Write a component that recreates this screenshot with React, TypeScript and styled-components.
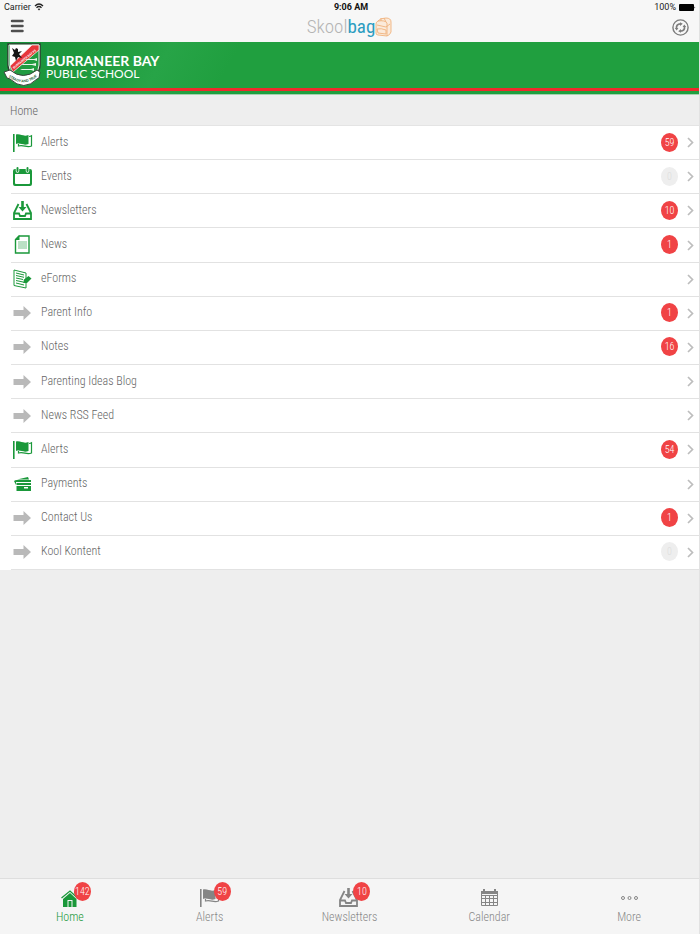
import React from "react";
import styled, { createGlobalStyle } from "styled-components";

const GREEN = "#1a983a";
const ui = `"Roboto Condensed", Roboto, sans-serif`;

const GlobalStyle = createGlobalStyle`
  * { box-sizing: border-box; }
  html { background: #eeeeee; }
  body { margin: 0; font-family: ${ui}; font-weight: 300; color: #666666; }
  a { color: inherit; text-decoration: none; }
  button { border: 0; padding: 0; background: none; cursor: pointer; }
  svg { display: block; flex: none; }
`;

const Page = styled.div`
  min-height: 100vh;
  display: flex;
  flex-direction: column;
  background: #eeeeee;
  border-right: 1px solid #e2e2e2;
`;

const TopBar = styled.header`
  background: #f7f7f7;
  height: 42px;
`;

const Columns = styled.div`
  display: grid;
  grid-template-columns: 1fr auto 1fr;
  align-items: center;
`;

const StatusBar = styled(Columns)`
  height: 14px;
  padding: 0 3px 0 4px;
  font: 400 9px/14px Roboto, sans-serif;
  color: #222222;
`;

const Side = styled.div<{ $end?: boolean }>`
  display: flex;
  align-items: center;
  gap: 3px;
  justify-content: ${(p) => (p.$end ? "flex-end" : "flex-start")};
`;

const Clock = styled.time`
  font-weight: 700;
  color: #111111;
  padding-left: 2px;
`;

const TitleBar = styled(Columns)`
  height: 26px;
  padding: 0 10px;
`;

const Brand = styled.h1`
  margin: 0;
  display: flex;
  align-items: center;
  font: 300 19px/26px ${ui};
  color: #b4b4b4;
`;

const BrandStrong = styled.span`
  font-weight: 400;
  color: #2b9cc0;
`;

const Banner = styled.div`
  height: 53px;
  background: linear-gradient(120deg, #16913a 0, #1f9c3e 90px, #27a447 150px, #209f3f 210px, #209f3f 100%);
  display: flex;
  flex-direction: column;
  border-bottom: 1px solid #a6d3af;
`;

const BannerContent = styled.div`
  flex: 1;
  display: flex;
  align-items: center;
  gap: 5px;
  padding-left: 3px;
`;

const Stripe = styled.div`
  flex: none;
  height: 3px;
  margin-bottom: 3px;
  background: #ee2a2c;
`;

const School = styled.div`
  display: flex;
  flex-direction: column;
  font: 400 12px/13px Lato, sans-serif;
  color: #ffffff;
  padding-top: 4px;
`;

const SchoolName = styled.strong`
  font-size: 14px;
  line-height: 12px;
  font-weight: 700;
`;

const Crumb = styled.div`
  height: 31px;
  padding: 0 10px;
  font-size: 12px;
  line-height: 32px;
  border-bottom: 1px solid #e4e4e4;
`;

const List = styled.ul`
  margin: 0;
  padding: 0;
  list-style: none;
  min-height: 444px;
  display: grid;
  grid-auto-rows: 1fr;
  background: #ffffff;
`;

const Item = styled.li`
  padding-left: 11px;
`;

const RowLink = styled.a`
  height: 100%;
  display: flex;
  align-items: center;
  border-bottom: 1px solid #e2e2e2;
  padding: 0 5px 1px 0;
`;

const RowIcon = styled.span`
  width: 30px;
  padding: 1px 0 0 2px;
`;

const RowLabel = styled.span`
  flex: 1;
  font-size: 12px;
  line-height: 16px;
  padding-bottom: 1px;
`;

const Badge = styled.span<{ $muted?: boolean }>`
  width: 17px;
  height: 19px;
  border-radius: 50%;
  background: ${(p) => (p.$muted ? "#eeeeee" : "#f04345")};
  color: ${(p) => (p.$muted ? "#dddddd" : "#ffffff")};
  font-size: 10px;
  line-height: 19px;
  text-align: center;
  margin-right: 8px;
`;

const TabBar = styled.nav`
  margin-top: auto;
  height: 56px;
  display: grid;
  grid-template-columns: repeat(5, 1fr);
  background: #f5f5f5;
  border-top: 1px solid #dedede;
`;

const Tab = styled.a<{ $active?: boolean }>`
  display: flex;
  flex-direction: column;
  align-items: center;
  padding-top: 9px;
  gap: 1px;
  font-size: 12px;
  line-height: 16px;
  color: ${(p) => (p.$active ? GREEN : "#888888")};
`;

const TabIcon = styled.span`
  position: relative;
  height: 20px;
`;

const TabBadge = styled(Badge)`
  position: absolute;
  top: -6px;
  left: 14px;
  margin: 0;
`;

type IconKind = "flag" | "calendar" | "inbox" | "news" | "form" | "arrow" | "cards" | "home" | "grid" | "more";

const drawings: Record<IconKind, React.ReactNode> = {
  flag: (
    <>
      <path d="M0 1h1.600v18H0z" />
      <path d="M3 1.500c5-1 7 2.500 12.500.5v9C10 13 8 9.500 3 11z" />
      <path d="M16 3.500q1.500 0 2.500-.7V13c-5 2-7.500-1.500-13 0v-2" fill="none" stroke="currentColor" strokeWidth="1.200" />
    </>
  ),
  calendar: (
    <>
      <path fillRule="evenodd" d="M2 2h15a2 2 0 0 1 2 2v13a2 2 0 0 1-2 2H2a2 2 0 0 1-2-2V4a2 2 0 0 1 2-2zm0 5v9q0 1 1 1h13q1 0 1-1V7z" />
      <path d="M4.500 1v3M14.500 1v3" stroke="#fff" strokeWidth="3.500" strokeLinecap="round" />
      <path d="M4.500 1v3M14.500 1v3" stroke="currentColor" strokeWidth="2" strokeLinecap="round" />
    </>
  ),
  inbox: (
    <>
      <path d="M5.500 3 1 12v6h17v-6L13.500 3M1 12.500h5l1 2.500h5l1-2.500h5" fill="none" stroke="currentColor" strokeWidth="1.800" />
      <path d="M8.200 0h2.600v6h2.700l-4 4.500-4-4.500h2.700z" />
    </>
  ),
  news: (
    <>
      <path d="M6 1h10v17H2.500V4.500z" fill="none" stroke="currentColor" strokeWidth="1.400" />
      <path d="M6.500 0v5H2z" />
      <path d="M5 7h9M5 9h9M5 11h9M5 13h9" stroke="currentColor" strokeWidth=".6" />
    </>
  ),
  form: (
    <>
      <path d="m1 1 12 3v15L1 16.500z" fill="none" stroke="currentColor" />
      <path d="m3 4 8 2M3 6.500l8 1.800M3 9l7 1.500M3 11.500l7 1.500M3 14l8 2" stroke="currentColor" />
      <path d="m10 14 1-3.500L15.500 7 18.500 9.500 14 14z" />
    </>
  ),
  arrow: <path d="M.500 7h10V3L18 10l-7.500 7v-4H.500z" />,
  cards: (
    <>
      <path d="m4 5.500 11-2.500 1 2.500z" />
      <path d="M4 6h14v2H3v3L1 7q1-1 3-1z" />
      <path fillRule="evenodd" d="M3.500 9H18v2H3.500zm0 3H18v5H3.500zm7.500 1v1.500h4V13z" />
    </>
  ),
  home: (
    <>
      <path d="m1.500 10 8.500-7 7.500 7" fill="none" stroke="currentColor" strokeWidth="1.300" />
      <path fillRule="evenodd" d="M3 11l7-6 6.500 6v8H3zm4.500 1v7h1v-6h3v6h1v-7zM14 3h2v4l-2-2z" />
    </>
  ),
  grid: (
    <>
      <path d="M2.500 3.500h16v14h-16zM2 7.500h16M2 10.500h16M2 14.500h16M6.500 7v11M10.500 7v11M14.500 7v11" fill="none" stroke="currentColor" />
      <path d="M2 3h17v3H2zM4 1h2v3H4zM15 1h2v3h-2z" />
    </>
  ),
  more: (
    <g fill="none" stroke="currentColor">
      <circle cx="4" cy="10" r="1.500" />
      <circle cx="10.500" cy="10" r="1.500" />
      <circle cx="17" cy="10" r="1.500" />
    </g>
  ),
};

const Icon = ({ kind, color = "currentColor" }: { kind: IconKind; color?: string }) => (
  <svg width="20" height="20" viewBox="0 0 20 20" fill="currentColor" color={color} aria-hidden="true" overflow="visible">
    {drawings[kind]}
  </svg>
);

const Crest = () => (
  <svg width="38" height="44" viewBox="0 0 38 44" aria-hidden="true">
    <path d="M5 1h32v21q0 10-16 16Q5 32 5 22z" fill="#219b40" stroke="#303c33" strokeWidth="1.500" />
    <path d="M6 2h30v20q0 9-15 15Q6 31 6 22z" fill="none" stroke="#e3efe5" strokeWidth="1" />
    <path d="M7 2h24L7 23z" fill="#fff" />
    <path d="M29 2h7v5L10 29l-3-6z" fill="#e7373b" stroke="#fff" strokeWidth=".7" />
    <text x="11" y="26" transform="rotate(-39 11 26)" fontFamily="Lato" fontSize="3" fontWeight="900" fill="#fff">BURRANEER BAY PS</text>
    <path d="m9 5 3 2 1-2 2 1v3l4-1-3 3 3 4-4-1-2 4-1-4-3-1 2-3z" fill="#161616" />
    <path d="m22 17 2-1h7l3-1v3l-3-1h-7zm-4 5 2-1h9l4-1v3l-4-1h-9zm-1 5 2-1h9l3-1v3l-3-1h-9z" fill="#e8f4e9" />
    <path d="m1 29 6-2q13 11 27 0l3 2-1 6-2 1q-13 13-27 0l-3-1z" fill="#fff" stroke="#38443b" strokeWidth="1" />
    <path id="motto" d="M3 32q18 15 34-1" fill="none" />
    <text fontFamily="Lato" fontSize="3.500" fontWeight="900" fill="#29643b">
      <textPath href="#motto" startOffset="3">STEADY AND TRUE</textPath>
    </text>
  </svg>
);

const Bag = () => (
  <svg width="17" height="20" viewBox="0 0 17 20" fill="none" stroke="#efb27d" strokeWidth=".9" aria-hidden="true">
    <path d="M3 4q2-3 8-3 5 0 5 4v10q-1 3-4 4l-9-1q-2 0-2-2V7q0-2 2-3z" fill="#fbeada" />
    <path d="M3 4q7-1 9 2v13M2 8l9 2 4-3M2 12q4-1 9 1v4l-8-1zM6 1v3M9 1l2 4" />
  </svg>
);

const Chevron = () => (
  <svg width="8" height="12" viewBox="0 0 8 12" fill="none" stroke="#bdbdbd" strokeWidth="1.700" aria-hidden="true">
    <path d="m2 2 4.500 4.500L2 11" />
  </svg>
);

const rows: { label: string; icon: IconKind; count?: number }[] = [
  { label: "Alerts", icon: "flag", count: 59 },
  { label: "Events", icon: "calendar", count: 0 },
  { label: "Newsletters", icon: "inbox", count: 10 },
  { label: "News", icon: "news", count: 1 },
  { label: "eForms", icon: "form" },
  { label: "Parent Info", icon: "arrow", count: 1 },
  { label: "Notes", icon: "arrow", count: 16 },
  { label: "Parenting Ideas Blog", icon: "arrow" },
  { label: "News RSS Feed", icon: "arrow" },
  { label: "Alerts", icon: "flag", count: 54 },
  { label: "Payments", icon: "cards" },
  { label: "Contact Us", icon: "arrow", count: 1 },
  { label: "Kool Kontent", icon: "arrow", count: 0 },
];

const tabs: { label: string; icon: IconKind; count?: number }[] = [
  { label: "Home", icon: "home", count: 142 },
  { label: "Alerts", icon: "flag", count: 59 },
  { label: "Newsletters", icon: "inbox", count: 10 },
  { label: "Calendar", icon: "grid" },
  { label: "More", icon: "more" },
];

export default function App() {
  return (
    <>
      <GlobalStyle />
      <Page>
        <TopBar>
          <StatusBar>
            <Side>
              Carrier
              <svg width="10" height="8" viewBox="0 0 10 8" fill="none" stroke="#222" strokeWidth="1.300" aria-hidden="true">
                <path d="M1 3q4-4 8 0M2.500 4.700q2.500-2.500 5 0" />
                <path d="m5 7.500-1.300-1.600q1.300-1 2.600 0z" fill="#222" stroke="none" />
              </svg>
            </Side>
            <Clock>9:06 AM</Clock>
            <Side $end>
              100%
              <svg width="17" height="7" viewBox="0 0 17 7" aria-hidden="true">
                <rect width="15" height="7" rx="1" />
                <path d="M15.500 2.500q1.500 1 0 2z" />
              </svg>
            </Side>
          </StatusBar>
          <TitleBar>
            <Side>
              <button aria-label="Menu">
                <svg width="14" height="16" viewBox="0 0 14 16" stroke="#4f4f4f" strokeWidth="2.500" strokeLinecap="round">
                  <path d="M2 2h10.500M2 7h10.500M2 12h10.500" />
                </svg>
              </button>
            </Side>
            <Brand>
              Skool<BrandStrong>bag</BrandStrong>
              <Bag />
            </Brand>
            <Side $end>
              <button aria-label="Refresh">
                <svg width="17" height="17" viewBox="0 0 17 17" fill="none" stroke="#7c7c7c" strokeWidth="1.400">
                  <circle cx="8.500" cy="8.500" r="7.600" />
                  <path d="M4.500 9.500Q4 5 8.500 4.800M12.500 7.500q.500 4.500-4 4.700" strokeWidth="1.700" />
                  <path d="M8 3.200 10.800 4.800 8 7zM9 13.800 6.200 12.200 9 10zM2.800 9h3.600l-1.700 2.500zM14.200 8h-3.600l1.700-2.500z" fill="#7c7c7c" stroke="none" />
                </svg>
              </button>
            </Side>
          </TitleBar>
        </TopBar>
        <Banner>
          <BannerContent>
            <Crest />
            <School>
              <SchoolName>BURRANEER BAY</SchoolName>
              <span>PUBLIC SCHOOL</span>
            </School>
          </BannerContent>
          <Stripe />
        </Banner>
        <Crumb>Home</Crumb>
        <List>
          {rows.map((r, i) => (
            <Item key={i}>
              <RowLink href="#">
                <RowIcon>
                  <Icon kind={r.icon} color={r.icon === "arrow" ? "#b9b9b9" : GREEN} />
                </RowIcon>
                <RowLabel>{r.label}</RowLabel>
                {r.count !== undefined && <Badge $muted={r.count === 0}>{r.count}</Badge>}
                <Chevron />
              </RowLink>
            </Item>
          ))}
        </List>
        <TabBar>
          {tabs.map((t, i) => (
            <Tab key={t.label} href="#" $active={i === 0}>
              <TabIcon>
                <Icon kind={t.icon} color={i === 0 ? GREEN : "#858585"} />
                {t.count !== undefined && <TabBadge>{t.count}</TabBadge>}
              </TabIcon>
              {t.label}
            </Tab>
          ))}
        </TabBar>
      </Page>
    </>
  );
}
